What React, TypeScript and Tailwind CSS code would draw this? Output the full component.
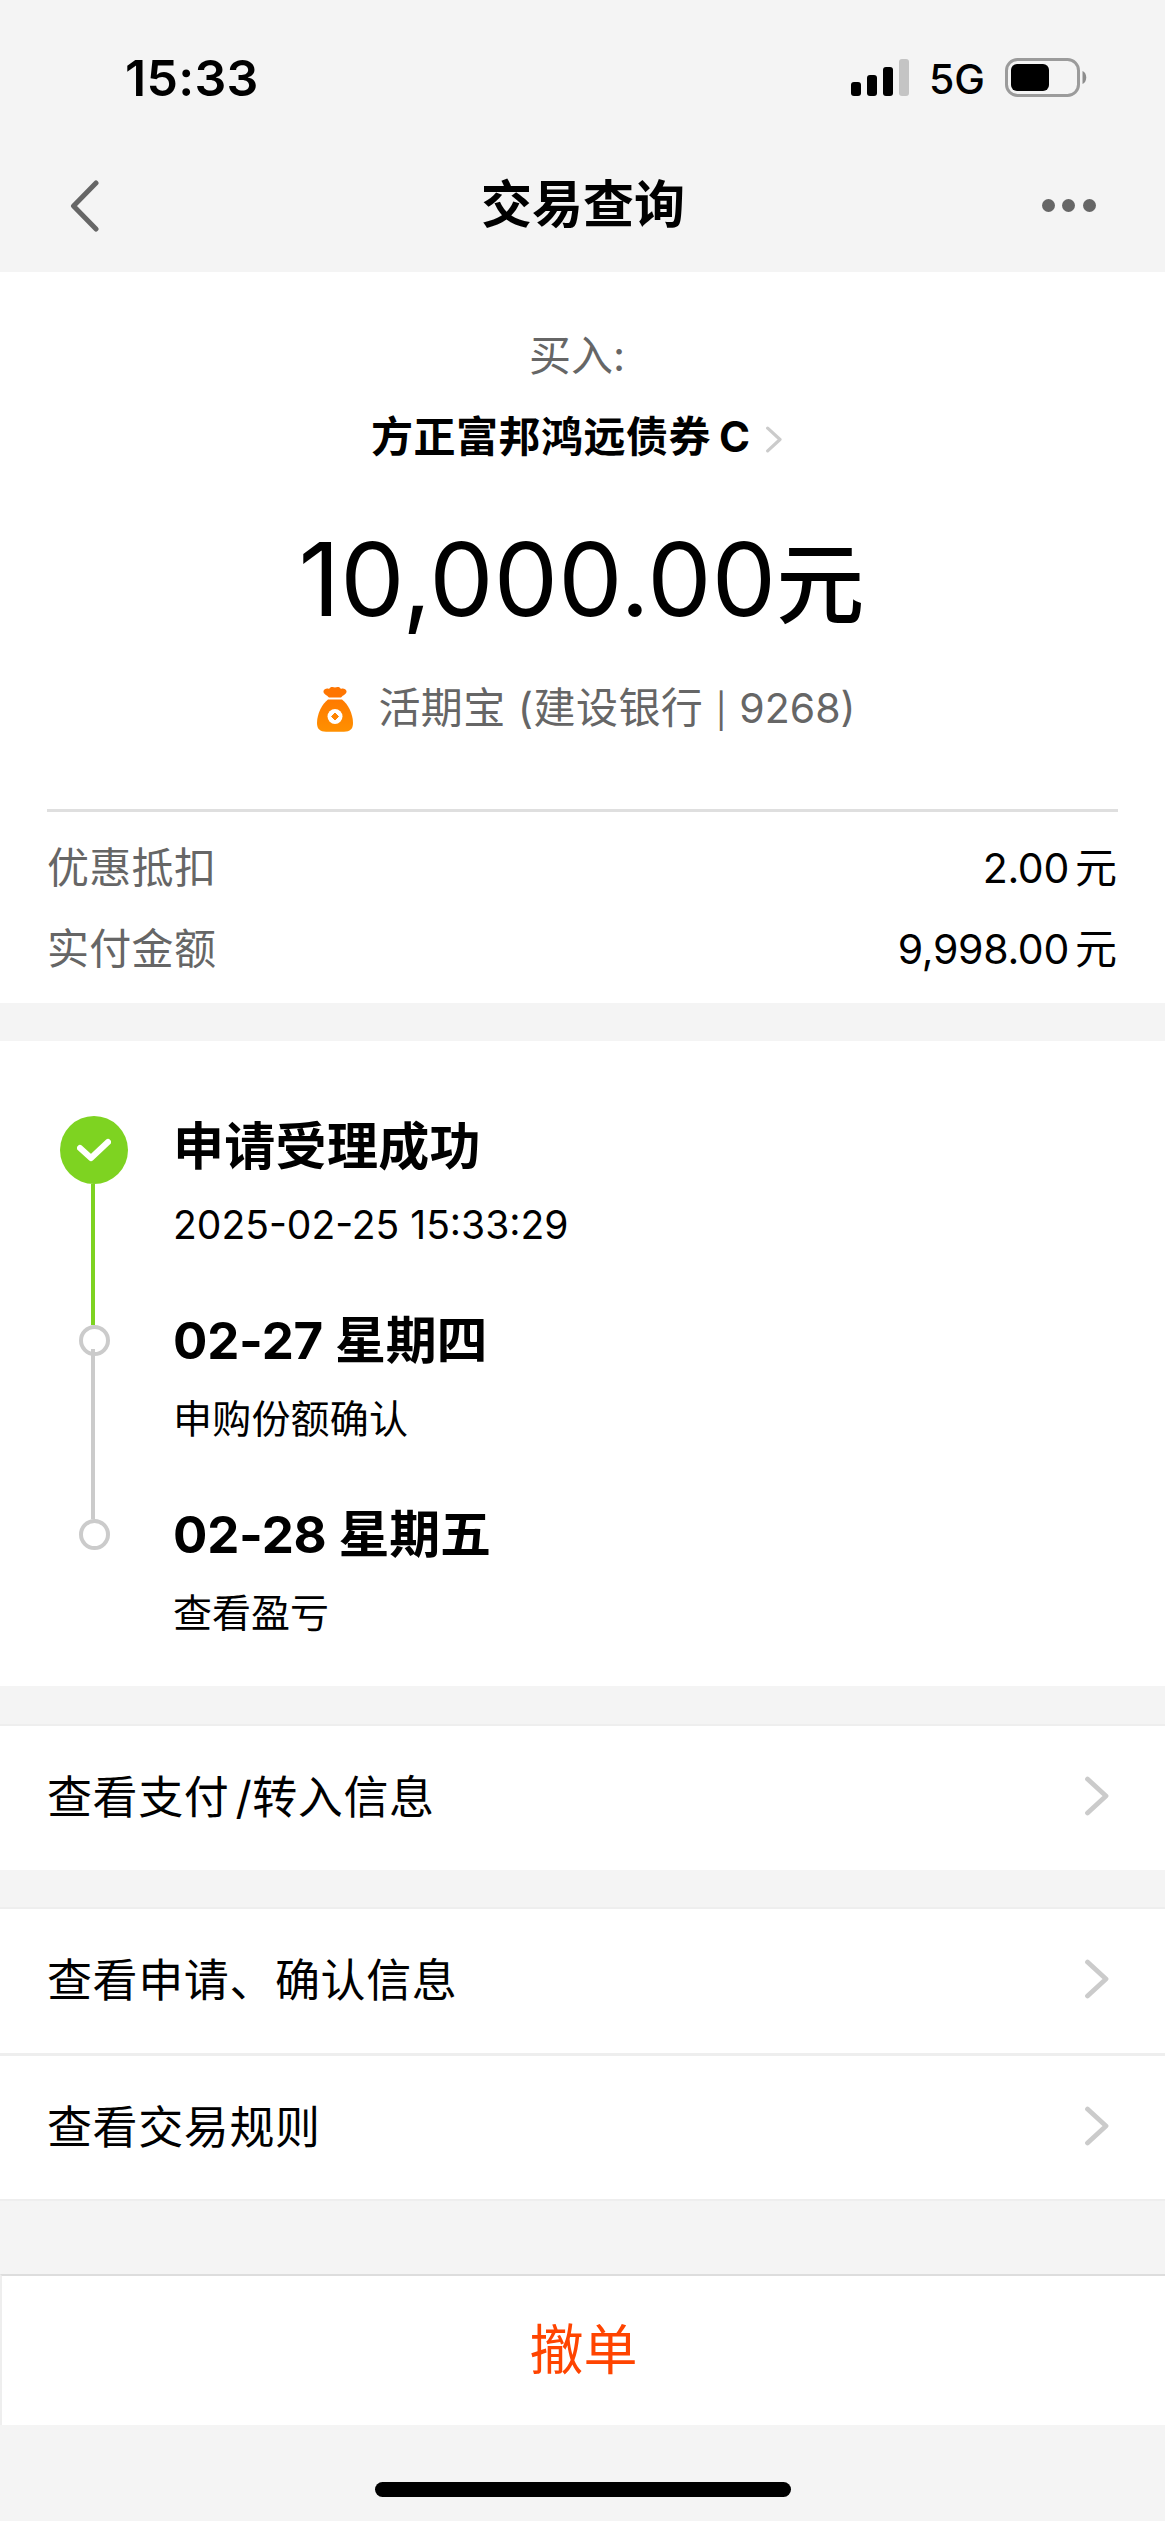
const amounts = [
  { label: "优惠抵扣", value: "2.00" },
  { label: "实付金额", value: "9,998.00" },
]

function Chevron({ className }: { className: string }) {
  return (
    <svg className={className} viewBox="0 0 24 40" fill="none" stroke="currentColor" strokeLinecap="round" strokeLinejoin="round">
      <path d="M2.500 3L21 20L2.500 37" strokeWidth="4.800" />
    </svg>
  )
}

function StatusBar() {
  return (
    <div className="flex h-[136px] items-center justify-between pt-5 pl-[125px] pr-[78px]">
      <span className="text-[50px] font-semibold leading-none tracking-[0.3px]">15:33</span>
      <div className="flex items-center">
        <svg className="h-[38px] w-[58px]" viewBox="0 0 58 38">
          <rect x="0" y="23" width="10" height="14" rx="3" />
          <rect x="16" y="16" width="10" height="21" rx="3" />
          <rect x="32" y="8" width="10" height="29" rx="3" />
          <rect x="48" y="0" width="10" height="37" rx="3" fill="#c4c4c4" />
        </svg>
        <span className="mt-0.5 ml-5 text-[41px] font-medium leading-none">5G</span>
        <svg className="ml-5 h-[40px] w-[82px]" viewBox="0 0 82 40">
          <rect x="1.500" y="1.500" width="72" height="36" rx="11" fill="none" stroke="#9b9b9b" strokeWidth="3" />
          <rect x="6" y="6" width="38" height="27" rx="6" />
          <path d="M77.500 13C82.500 15 82.500 24 77.500 26Z" fill="#8d8d8d" />
        </svg>
      </div>
    </div>
  )
}

function MoneyBag() {
  return (
    <svg className="h-[48px] w-[38px]" viewBox="0 0 38 48">
      <defs>
        <linearGradient id="bag" x1="0" y1="0" x2="0" y2="1">
          <stop offset="0" stopColor="#ff7a00" />
          <stop offset="1" stopColor="#ff9000" />
        </linearGradient>
      </defs>
      <path d="M13 11.500C11 9 7 8 7.500 5C8 3 11 2 13 3C14 0.500 17 0.500 19 1.500C21 0.500 24 0.500 25 3C27 2 30 3 30.500 5C31 8 27 9 25 11.500Z" fill="#ff7500" />
      <path d="M12 13.500H26C32 18 37 28 37 37C37 43 34 45.700 28 45.700H10C4 45.700 1 43 1 37C1 28 6 18 12 13.500Z" fill="url(#bag)" />
      <circle cx="19" cy="30.500" r="7.500" fill="#fff" />
      <path d="M19 27L22.500 30.500L19 34L15.500 30.500Z" fill="#ff8400" stroke="#ff8400" strokeWidth="1" strokeLinejoin="round" />
    </svg>
  )
}

function LinkRow({ children }: { children: React.ReactNode }) {
  return (
    <div className="flex h-full items-center justify-between bg-white pl-[47px] pr-[56px] text-[45px] tracking-[0.6px]">
      <span>{children}</span>
      <Chevron className="mb-1 h-[40px] w-[24px] text-[#cbcbcb]" />
    </div>
  )
}

export default function App() {
  return (
    <div className="h-[2521px] w-[1165px] bg-[#f4f4f4] font-['Inter','Noto_Sans_CJK_SC',sans-serif] text-black">
      <StatusBar />
      <div className="flex h-[136px] items-center justify-between pt-[3px] pl-[70px] pr-[69px]">
        <div className="w-[54px]">
          <svg className="h-[52px] w-[29px] text-[#666]" viewBox="0 0 29 52" fill="none" stroke="currentColor" strokeWidth="5" strokeLinecap="round" strokeLinejoin="round">
            <path d="M26 3L3.500 26L26 49" />
          </svg>
        </div>
        <h1 className="mb-0.5 text-[51px] font-bold leading-none">交易查询</h1>
        <div className="flex w-[54px] justify-between">
          <i className="size-[13px] rounded-full bg-[#666]" />
          <i className="size-[13px] rounded-full bg-[#666]" />
          <i className="size-[13px] rounded-full bg-[#666]" />
        </div>
      </div>

      <div className="h-[731px] bg-white px-[47px]">
        <div className="flex h-[540px] flex-col items-center border-b-3 border-[#dfdfdf] pt-[59px]">
          <p className="mr-[11px] text-[42px] leading-[50px] text-[#666]">买入:</p>
          <div className="mt-[31px] mr-[12px] flex items-center text-[42px] font-bold leading-[50px]">
            <span className="tracking-[0.5px]">方正富邦鸿远债券</span>
            <span className="ml-2">C</span>
            <Chevron className="mt-1 ml-4 h-[27px] w-[16px] text-[#cbcbcb]" />
          </div>
          <p className="mt-[55px] mr-0.5 text-[102px] leading-[124px] tracking-[0.2px]">
            10,000.00<span className="text-[88px] font-medium">元</span>
          </p>
          <div className="mt-[37px] ml-[7px] flex items-center text-[42px] leading-[50px] text-[#666]">
            <MoneyBag />
            <span className="ml-6 tracking-[0.4px]">
              活期宝 (建设银行 <span className="text-[34px]">|</span> <span className="text-[41px] tracking-normal">9268)</span>
            </span>
          </div>
        </div>
        {amounts.map((item) => (
          <div key={item.label} className="flex h-[81px] items-end justify-between pr-px text-[42px] leading-[50px]">
            <span className="tracking-[0.3px] text-[#666]">{item.label}</span>
            <span>
              <span className="text-[41px] tracking-[-0.3px]">{item.value}</span>
              <span className="ml-1.5">元</span>
            </span>
          </div>
        ))}
      </div>

      <div className="mt-[38px] flex h-[645px] bg-white pl-[60px] pt-[75px]">
        <div className="flex w-[68px] flex-col items-center">
          <div className="flex size-[68px] shrink-0 items-center justify-center rounded-full bg-[#7ed321]">
            <svg className="h-[24px] w-[34px]" viewBox="0 0 34 24" fill="none" stroke="#fff" strokeWidth="6" strokeLinecap="round" strokeLinejoin="round">
              <path d="M3 10L14 20L31 4" />
            </svg>
          </div>
          <div className="mr-[2px] h-[141px] w-1 bg-[#7ed321]" />
          <div className="size-[31px] shrink-0 rounded-full border-4 border-[#cbcbcb]" />
          <div className="-mt-[7px] mr-[2px] h-[170px] w-1 bg-[#cbcbcb]" />
          <div className="size-[31px] shrink-0 rounded-full border-4 border-[#cbcbcb]" />
        </div>
        <div className="ml-[45px]">
          <h2 className="text-[51px] font-bold leading-[62px] tracking-[0.3px]">申请受理成功</h2>
          <p className="mt-[23px] text-[39px] leading-[48px]">2025-02-25 15:33:29</p>
          <h2 className="mt-[61px] text-[51px] font-bold leading-[62px] tracking-[-0.2px]">02-27 星期四</h2>
          <p className="mt-[23px] text-[39px] leading-[48px] tracking-[0.2px]">申购份额确认</p>
          <h2 className="mt-[61px] text-[51px] font-bold leading-[62px] tracking-[-0.2px]">02-28 星期五</h2>
          <p className="mt-[23px] text-[39px] leading-[48px]">查看盈亏</p>
        </div>
      </div>

      <div className="mt-[38px] h-[146px] border-t-2 border-[#eee]">
        <LinkRow>查看支付<span className="ml-1.5">/</span>转入信息</LinkRow>
      </div>
      <div className="mt-[37px] h-[146px] border-t-2 border-[#eee]">
        <LinkRow>查看申请、确认信息</LinkRow>
      </div>
      <div className="h-[148px] border-t-3 border-b-2 border-[#eee]">
        <LinkRow>查看交易规则</LinkRow>
      </div>

      <button className="mt-[73px] flex h-[151px] w-full items-center justify-center border-t-2 border-l-2 border-t-[#ddd] border-l-[#eee] bg-white text-[54px] text-[#ff4400]">
        撤单
      </button>
      <div className="mx-auto mt-[57px] h-[15px] w-[416px] rounded-full bg-black" />
    </div>
  )
}
